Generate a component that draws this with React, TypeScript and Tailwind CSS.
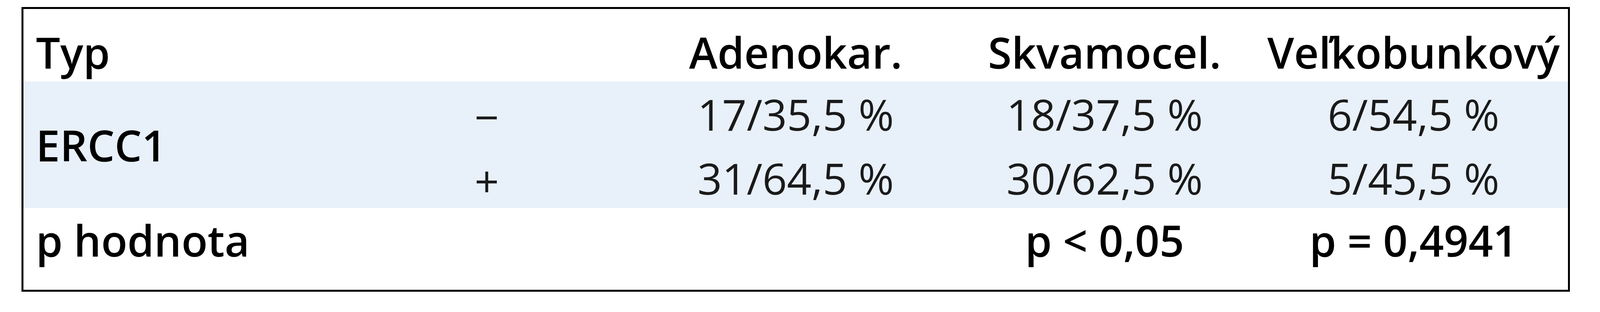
import React from "react";

export default function App() {
  return (
    <div className="w-full h-[800px] bg-white pt-[18px] pl-[55px] pr-[77px] font-['Open_Sans',sans-serif] [font-stretch:90%] text-[110px] leading-[150px]">
      <div className="w-full h-[730px] border-[5px] border-black flex flex-col">
        {/* Header row */}
        <div className="grid grid-cols-5 h-[186px] pt-[35px] font-semibold text-black">
          <div className="pl-[32px]">Typ</div>
          <div></div>
          <div className="text-center">Adenokar.</div>
          <div className="text-center">Skvamocel.</div>
          <div className="text-center">Veľkobunkový</div>
        </div>

        {/* ERCC1 rows */}
        <div className="grid grid-cols-5 grid-rows-[162px_162px] bg-[#e8f0fa] text-[#1a1a1a]">
          <div className="row-span-2 self-center pl-[32px] font-semibold text-black">ERCC1</div>
          <div className="text-center pt-[14px]">−</div>
          <div className="text-center pt-[8px]">17/35,5 %</div>
          <div className="text-center pt-[8px]">18/37,5 %</div>
          <div className="text-center pt-[8px]">6/54,5 %</div>
          <div className="text-center pt-[16px]">+</div>
          <div className="text-center pt-[10px]">31/64,5 %</div>
          <div className="text-center pt-[10px]">30/62,5 %</div>
          <div className="text-center pt-[10px]">5/45,5 %</div>
        </div>

        {/* p value row */}
        <div className="grid grid-cols-5 flex-1 pt-[7px] font-semibold text-black">
          <div className="pl-[32px]">p hodnota</div>
          <div></div>
          <div></div>
          <div className="text-center">p &lt; 0,05</div>
          <div className="text-center">p = 0,4941</div>
        </div>
      </div>
    </div>
  );
}
